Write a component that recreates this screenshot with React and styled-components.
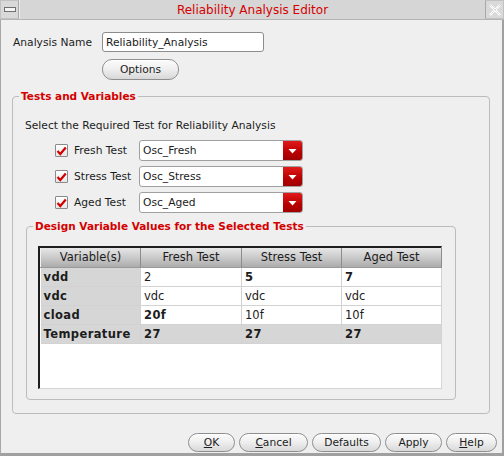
import React from 'react';
import styled, { createGlobalStyle } from 'styled-components';

const Global = createGlobalStyle`
  html, body { margin: 0; padding: 0; background: #efefef; }
  body { font-family: "DejaVu Sans", "Liberation Sans", sans-serif; font-size: 10.7px; color: #1c1c1c; }
  * { box-sizing: border-box; }
`;

const Window = styled.div`
  width: 504px;
  height: 456px;
  display: flex;
  flex-direction: column;
  background: #efefef;
`;

const TitleBar = styled.div`
  height: 20px;
  display: flex;
  background: #d6d6d6;
  border-bottom: 1px solid #b4b4b4;
`;

const TitleButton = styled.div`
  width: 19px;
  display: flex;
  align-items: center;
  justify-content: center;
  background: #d9d9d9;
  border: 1px solid #c2c2c2;
  border-${p => (p.$side === 'left' ? 'right' : 'left')}: 1px solid #a8a8a8;
`;

const TitleText = styled.div`
  flex: 1;
  display: flex;
  align-items: center;
  justify-content: center;
  color: #d40000;
  font-size: 12px;
  border-left: 1px solid #ececec;
`;

const Body = styled.div`
  flex: 1;
  display: flex;
  flex-direction: column;
  padding: 12px 0 0 11px;
  border-left: 1px solid #a8a8a8;
  border-right: 2px solid #a0a0a0;
  border-bottom: 3px solid #a0a0a0;
`;

const NameRow = styled.div`
  display: flex;
  align-items: center;
  padding-left: 1px;
`;

const Label = styled.span`
  width: ${p => p.$w || 'auto'};
  white-space: nowrap;
`;

const TextInput = styled.div`
  width: 162px;
  height: 20px;
  border: 1px solid #8c8c8c;
  border-radius: 3px;
  background: #fff;
  padding-left: 3px;
  display: flex;
  align-items: center;
`;

const Pill = styled.button`
  font-family: inherit;
  font-size: 10.7px;
  color: #1c1c1c;
  width: ${p => p.$w}px;
  height: ${p => p.$h || 19}px;
  padding: 0;
  border: 1px solid #8e8e8e;
  border-radius: 10px;
  background: linear-gradient(#fbfbfb, #f0f0f0 45%, #d8d8d8);
  box-shadow: inset 0 1px 0 #ffffff;
  display: flex;
  align-items: center;
  justify-content: center;
`;

const OptionsWrap = styled.div`
  margin: 7px 0 0 90px;
`;

const Group = styled.fieldset`
  margin: ${p => p.$m};
  width: ${p => p.$w}px;
  padding: ${p => p.$pad};
  border: 1px solid #bcbcbc;
  border-radius: 4px;
  display: flex;
  flex-direction: column;
`;

const Legend = styled.legend`
  color: #d40000;
  font-weight: bold;
  font-size: 10.5px;
  padding: 0 2px;
  margin-left: ${p => p.$ml}px;
`;

const Prompt = styled.div`
  margin-top: 17px;
`;

const TestRows = styled.div`
  display: flex;
  flex-direction: column;
  gap: 5px;
  margin: 8px 0 0 30px;
`;

const TestRow = styled.div`
  display: flex;
  align-items: center;
  height: 21px;
`;

const CheckBox = styled.span`
  width: 13px;
  height: 13px;
  border: 1px solid #8a8a8a;
  border-radius: 1px;
  background: linear-gradient(#ffffff, #e6e6e6);
  display: flex;
  align-items: center;
  justify-content: center;
  margin-right: 6px;
`;

const Combo = styled.div`
  width: 164px;
  height: 21px;
  border: 1px solid #a0a0a0;
  border-radius: 3px;
  background: #fff;
  display: flex;
  overflow: hidden;
`;

const ComboText = styled.div`
  flex: 1;
  padding-left: 3px;
  display: flex;
  align-items: center;
`;

const ComboArrow = styled.div`
  width: 19px;
  background: linear-gradient(#e21a1a, #b80000 60%, #a00000);
  display: flex;
  align-items: center;
  justify-content: center;
`;

const TableFrame = styled.div`
  width: 404px;
  height: 143px;
  background: #fff;
  border-top: 2px solid #1e1e1e;
  border-left: 2px solid #1e1e1e;
  border-right: 1px solid #d6d6d6;
  border-bottom: 1px solid #d6d6d6;
  margin-top: 14px;
  font-size: 11.5px;
`;

const Table = styled.table`
  border-collapse: collapse;
  table-layout: fixed;
  width: 401px;
`;

const Th = styled.th`
  height: 19px;
  padding: 0;
  font-weight: normal;
  text-align: center;
  background: linear-gradient(#e6e6e6, #c4c4c4 60%, #ababab);
  border-right: 1px solid #8c8c8c;
  border-left: 1px solid #f2f2f2;
  border-bottom: 1px solid #9a9a9a;
`;

const Td = styled.td`
  height: 19px;
  padding: 0 0 0 3px;
  font-weight: ${p => (p.$bold ? 'bold' : 'normal')};
  letter-spacing: ${p => (p.$bold ? '0.4px' : '0')};
  background: ${p => (p.$shade ? '#d6d6d6' : '#ffffff')};
  border-right: 1px solid #d2d2d2;
  border-bottom: 1px solid #d2d2d2;
  white-space: nowrap;
`;

const Footer = styled.div`
  margin-top: auto;
  margin-bottom: 1px;
  padding-right: 5px;
  display: flex;
  justify-content: flex-end;
  gap: 4px;
`;

const U = styled.span`
  text-decoration: underline;
`;

const Check = () => (
  <svg width="11" height="10" viewBox="0 0 11 10">
    <path d="M1.5 5 L4.3 8 L9.8 1.5" fill="none" stroke="#d00000" strokeWidth="2.2" strokeLinejoin="miter" />
  </svg>
);

const Arrow = () => (
  <svg width="9" height="6" viewBox="0 0 9 6">
    <path d="M0.5 1 L8.5 1 L4.5 5.5 Z" fill="#ffffff" />
  </svg>
);

const tests = [
  { label: 'Fresh Test', value: 'Osc_Fresh' },
  { label: 'Stress Test', value: 'Osc_Stress' },
  { label: 'Aged Test', value: 'Osc_Aged' },
];

const rows = [
  { name: 'vdd', cells: [['2', false], ['5', true], ['7', true]] },
  { name: 'vdc', cells: [['vdc', false], ['vdc', false], ['vdc', false]] },
  { name: 'cload', cells: [['20f', true], ['10f', false], ['10f', false]] },
  { name: 'Temperature', shade: true, cells: [['27', true], ['27', true], ['27', true]] },
];

export default function App() {
  return (
    <>
      <Global />
      <Window>
        <TitleBar>
          <TitleButton $side="left">
            <svg width="12" height="5" viewBox="0 0 12 5">
              <rect x="0.5" y="0.5" width="11" height="4" fill="#f4f4f4" stroke="#707070" />
            </svg>
          </TitleButton>
          <TitleText>Reliability Analysis Editor</TitleText>
          <TitleButton $side="right">
            <svg width="12" height="12" viewBox="0 0 12 12">
              <path d="M1 1 L11 11 M11 1 L1 11" stroke="#ffffff" strokeWidth="2.4" />
              <path d="M1 1 L11 11 M11 1 L1 11" stroke="#c4c4c4" strokeWidth="1" strokeDasharray="1 1" />
            </svg>
          </TitleButton>
        </TitleBar>
        <Body>
          <NameRow>
            <Label $w="89px">Analysis Name</Label>
            <TextInput>Reliability_Analysis</TextInput>
          </NameRow>
          <OptionsWrap>
            <Pill $w={77} $h={21}>Options</Pill>
          </OptionsWrap>
          <Group $m="10px 0 0 0" $w={478} $pad="0 12px 13px 12px">
            <Legend $ml={-6}>Tests and Variables</Legend>
            <Prompt>Select the Required Test for Reliability Analysis</Prompt>
            <TestRows>
              {tests.map(t => (
                <TestRow key={t.label}>
                  <CheckBox><Check /></CheckBox>
                  <Label $w="65px">{t.label}</Label>
                  <Combo>
                    <ComboText>{t.value}</ComboText>
                    <ComboArrow><Arrow /></ComboArrow>
                  </Combo>
                </TestRow>
              ))}
            </TestRows>
            <Group $m="7px 0 0 1px" $w={430} $pad="0 11px 10px 11px">
              <Legend $ml={-5}>Design Variable Values for the Selected Tests</Legend>
              <TableFrame>
                <Table>
                  <colgroup>
                    <col style={{ width: 100 }} />
                    <col style={{ width: 101 }} />
                    <col style={{ width: 100 }} />
                    <col style={{ width: 100 }} />
                  </colgroup>
                  <thead>
                    <tr>
                      <Th>Variable(s)</Th>
                      <Th>Fresh Test</Th>
                      <Th>Stress Test</Th>
                      <Th>Aged Test</Th>
                    </tr>
                  </thead>
                  <tbody>
                    {rows.map(r => (
                      <tr key={r.name}>
                        <Td $bold $shade>{r.name}</Td>
                        {r.cells.map(([v, b], i) => (
                          <Td key={i} $bold={b} $shade={r.shade}>{v}</Td>
                        ))}
                      </tr>
                    ))}
                  </tbody>
                </Table>
              </TableFrame>
            </Group>
          </Group>
          <Footer>
            <Pill $w={47}><U>O</U>K</Pill>
            <Pill $w={69}><U>C</U>ancel</Pill>
            <Pill $w={69}>Defaults</Pill>
            <Pill $w={57}>Apply</Pill>
            <Pill $w={51}><U>H</U>elp</Pill>
          </Footer>
        </Body>
      </Window>
    </>
  );
}
